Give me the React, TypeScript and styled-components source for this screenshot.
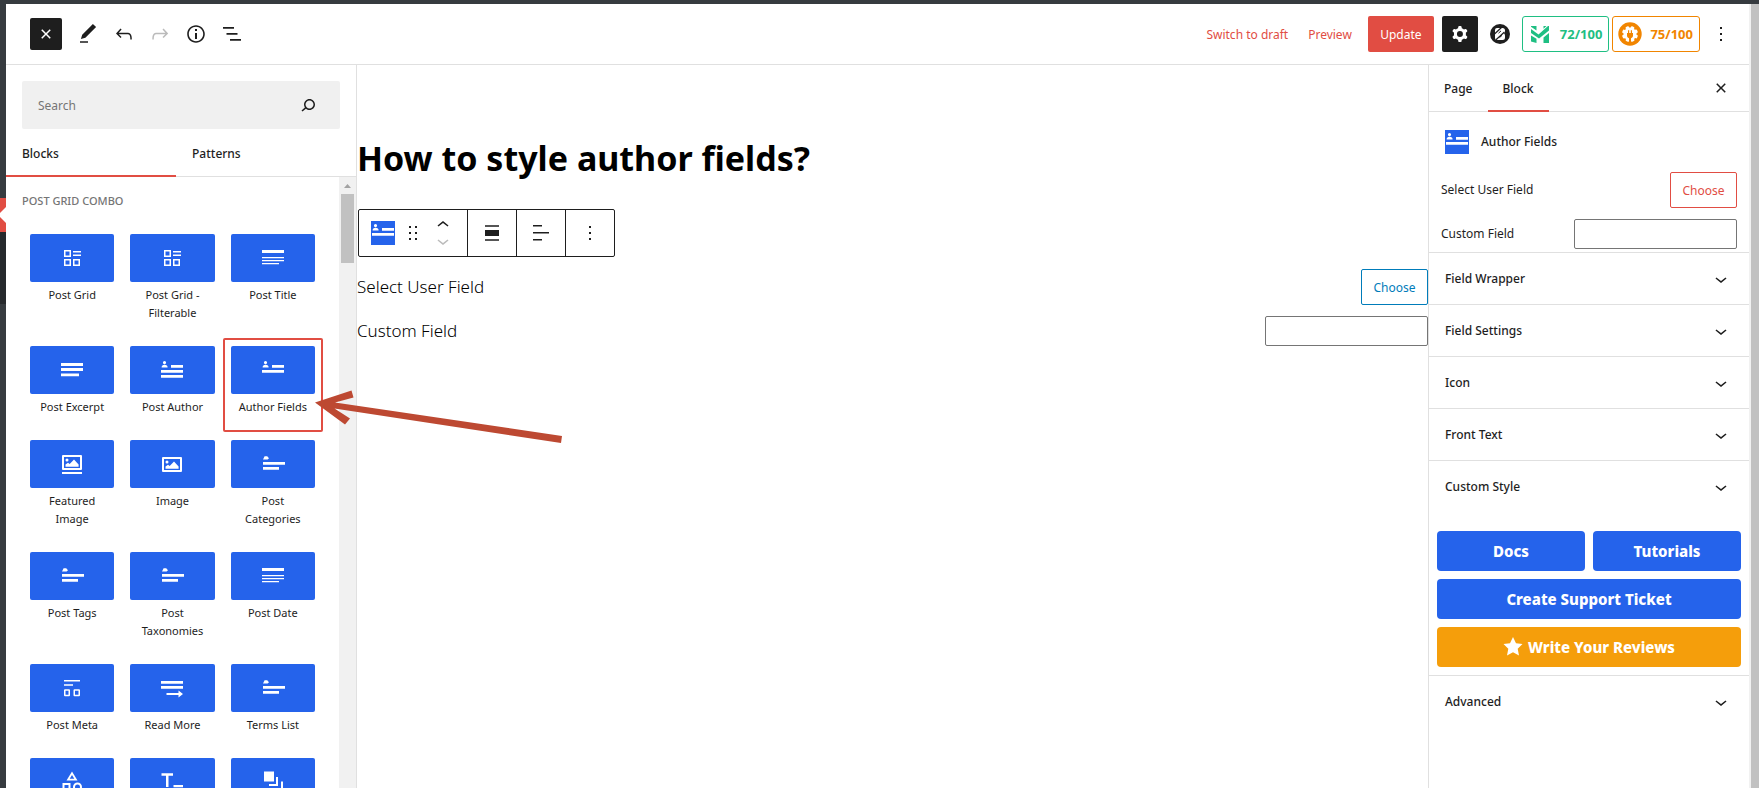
import React from 'react';
import styled, { createGlobalStyle, css } from 'styled-components';

const accent = '#e14d43';
const blue = '#2563eb';
const ink = '#1e1e1e';
const line = '#e0e0e0';

const GlobalStyle = createGlobalStyle`
  * { box-sizing: border-box; }
  body {
    margin: 0;
    background: #fff;
    color: ${ink};
    font: 400 12px/18px "Noto Sans", "Open Sans", sans-serif;
  }
  button, input { font: inherit; color: inherit; margin: 0; }
  button { padding: 0; border: 0; background: none; cursor: pointer; }
  h1, h2, p { margin: 0; }
  a { text-decoration: none; }
`;

/* ---------- icons ---------- */

const Svg = styled.svg<{ $size?: number }>`
  display: block;
  flex: none;
  width: ${({ $size = 24 }) => $size}px;
  height: ${({ $size = 24 }) => $size}px;
  fill: currentColor;
`;

const Icon = ({ d }: { d: string }) => (
  <Svg viewBox="0 0 24 24" aria-hidden="true">
    <path fillRule="evenodd" d={d} />
  </Svg>
);

const paths = {
  close:
    'M12 13.06l3.712 3.713 1.061-1.06L13.061 12l3.712-3.712-1.06-1.06L12 10.938 8.288 7.227l-1.061 1.06L10.939 12l-3.712 3.712 1.06 1.061L12 13.061z',
  pencil: 'M20.1 5.1L16.9 2 6.2 12.7l-1.3 4.4 4.5-1.3L20.1 5.1zM4 20.8h8v-1.5H4v1.5z',
  undo: 'M18.3 11.7c-.6-.6-1.4-.9-2.3-.9H6.7l2.9-3.3-1.1-1-4.5 5L8.5 16l1-1-2.7-2.7H16c.5 0 .9.2 1.3.5 1 1 1 3.4 1 4.5v.3h1.5v-.2c0-1.5 0-4.3-1.5-5.7z',
  redo: 'M15.6 6.5l-1.1 1 2.9 3.3H8c-.9 0-1.7.3-2.3.9-1.4 1.5-1.4 4.2-1.4 5.6v.2h1.5v-.3c0-1.1 0-3.5 1-4.5.3-.3.7-.5 1.3-.5h9.2L14.5 15l1.1 1.1 4.6-4.6-4.6-5z',
  info: 'M12 3.2c-4.8 0-8.8 3.9-8.8 8.8 0 4.8 3.9 8.8 8.8 8.8 4.8 0 8.8-3.9 8.8-8.8 0-4.8-4-8.8-8.8-8.8zm0 16c-4 0-7.2-3.3-7.2-7.2C4.8 8 8 4.8 12 4.8s7.2 3.3 7.2 7.2c0 4-3.2 7.2-7.2 7.2zM11 17h2v-6h-2v6zm0-8h2V7h-2v2z',
  list: 'M3 5h11v1.7H3V5zm3.5 6h11v1.7h-11V11zM21 17H10v1.7h11V17z',
  search:
    'M13.5 6C10.5 6 8 8.5 8 11.5c0 1.1.3 2.1.9 3l-3.4 3 1 1.1 3.4-2.9c1 .9 2.2 1.4 3.6 1.4 3 0 5.5-2.5 5.5-5.5C19 8.5 16.5 6 13.5 6zm0 9.5c-2.2 0-4-1.8-4-4s1.8-4 4-4 4 1.8 4 4-1.8 4-4 4z',
  down: 'M17.5 11.6L12 16l-5.5-4.4.9-1.2L12 14l4.500-3.600 1 1.200z',
  up: 'M6.500 12.400L12 8l5.500 4.400-.9 1.200L12 10l-4.500 3.600-1-1.200z',
  drag: 'M8 7h2V5H8v2zm0 6h2v-2H8v2zm0 6h2v-2H8v2zm6-14v2h2V5h-2zm0 8h2v-2h-2v2zm0 6h2v-2h-2v2z',
  alignNone: 'M5 15h14V9H5v6zm0 4.8h14v-1.5H5v1.5zM5 4.2v1.5h14V4.2H5z',
  alignLeft: 'M13 5.5H4V4h9v1.5zm7 7H4V11h16v1.5zm-7 7H4V18h9v1.5z',
  more: 'M13 19h-2v-2h2v2zm0-6h-2v-2h2v2zm0-6h-2V5h2v2z',
  cog: 'M10.289 4.836A1 1 0 0111.275 4h1.306a1 1 0 01.987.836l.244 1.466c.787.26 1.503.679 2.108 1.218l1.393-.522a1 1 0 011.216.437l.653 1.13a1 1 0 01-.23 1.273l-1.148.944a6.025 6.025 0 010 2.435l1.149.946a1 1 0 01.23 1.272l-.653 1.13a1 1 0 01-1.216.437l-1.394-.522c-.605.54-1.32.958-2.108 1.218l-.244 1.466a1 1 0 01-.987.836h-1.306a1 1 0 01-.986-.836l-.244-1.466a5.995 5.995 0 01-2.108-1.218l-1.394.522a1 1 0 01-1.217-.436l-.653-1.131a1 1 0 01.23-1.272l1.149-.946a6.026 6.026 0 010-2.435l-1.148-.944a1 1 0 01-.23-1.272l.653-1.131a1 1 0 011.217-.437l1.393.522a5.994 5.994 0 012.108-1.218l.244-1.466zM14.929 12a3 3 0 11-6 0 3 3 0 016 0z',
  // block glyphs
  grid: 'M4 4h7v7H4zM5.5 5.5v4h4v-4zM4 13h7v7H4zM5.5 14.5v4h4v-4zM13 13h7v7h-7zM14.5 14.5v4h4v-4zM13 5h8v1.5h-8zM13 8.5h8V10h-8z',
  title: 'M1 4h22v3H1zM1 11h22v1.3H1zM1 14h22v1.3H1zM1 17h17v1.3H1z',
  excerpt: 'M1 5h22v3H1zM1 10h22v3H1zM1 15.5h18v2.8H1z',
  author:
    'M4.5 3a1.6 1.6 0 110 3.2 1.6 1.6 0 010-3.2zM1.6 9.6c0-2 1-2.9 3-2.9s3 .9 3 2.9zM11 7h12v2.8H11zM1 12h22v2.8H1zM1 17h22v2.8H1z',
  authorFields:
    'M4.5 3a1.6 1.6 0 110 3.2 1.6 1.6 0 010-3.2zM1.6 9.6c0-2 1-2.9 3-2.9s3 .9 3 2.9zM11 7h12v2.8H11zM1 12h22v2.8H1z',
  featured:
    'M3 3h18a1 1 0 011 1v13a1 1 0 01-1 1H3a1 1 0 01-1-1V4a1 1 0 011-1zM4 5v11h16V5zM7 6.5a1.5 1.5 0 110 3 1.5 1.5 0 010-3zM5.5 14.7v-2.2l2.5-1.7 1.7 1.2L14 7.4l4.6 5v2.3zM2 20h20v2H2z',
  image:
    'M3 5h18a1 1 0 011 1v13a1 1 0 01-1 1H3a1 1 0 01-1-1V6a1 1 0 011-1zM4 7v11h16V7zM7 8.5a1.5 1.5 0 110 3 1.5 1.5 0 010-3zM5.5 16.7v-2.2l2.5-1.7 1.7 1.2L14 9.4l4.6 5v2.3z',
  terms: 'M2 7.5L3.6 4.3h2.6L8 6.3 6.6 7.5zM2 10h22v2.8H2zM2 15h16v2.8H2z',
  meta: 'M4 4h16v1.5H4zM4 8.3h9v1.5H4zM5 13.3h4a1 1 0 011 1v5a1 1 0 01-1 1H5a1 1 0 01-1-1v-5a1 1 0 011-1zM5.5 14.8v4h3v-4zM14.5 13.3H19a1 1 0 011 1v5a1 1 0 01-1 1h-4.5a1 1 0 01-1-1v-5a1 1 0 011-1zM15 14.8v4h3.5v-4z',
  readMore: 'M1 5h22v2.8H1zM1 10h22v2.8H1zM6.5 17h12v-2.500L23 18l-4.500 3.500V19h-12z',
  shapes:
    'M12 1.5l5.500 9h-11zM12 5L9.700 8.800h4.600zM2.500 13h8v8h-8zM4.500 15v4h4v-4zM17.500 12.500a4.500 4.500 0 110 9 4.500 4.500 0 010-9zM17.500 14.500a2.500 2.500 0 100 5 2.500 2.500 0 000-5z',
  text: 'M1.500 3.300H13v2.400H8.500V17H6V5.700H1.500zM13.500 15H23v2.300h-9.500z',
  layers: 'M3 1.500h10v10H3zM15 7h2v9H8v-2h7zM20 11.500h2v10h-9v-2h7z',
};

type Glyph = keyof typeof paths;

/* ---------- page shell ---------- */

const Page = styled.div`
  position: relative;
  display: flex;
  height: 100vh;
  border-top: 4px solid #363b3f;
  overflow: hidden;
`;

const AdminEdge = styled.div`
  display: flex;
  flex-direction: column;
  flex: none;
  width: 6px;
  padding-top: 194px;
  background: #363b3f;
`;

const CurrentMenu = styled.div`
  height: 34px;
  background: ${accent};
`;

const SubMenu = styled.div`
  height: 72px;
  background: #26292c;
`;

const Editor = styled.div`
  display: flex;
  flex-direction: column;
  flex: 1;
  min-width: 0;
`;

const Workspace = styled.div`
  display: flex;
  flex: 1;
  min-height: 0;
`;

const PageScrollbar = styled.div`
  flex: none;
  width: 10px;
  border-left: 2px solid #f1f1f1;
  background: #c1c1c1;
`;

/* ---------- header ---------- */

const Header = styled.header`
  display: flex;
  align-items: center;
  justify-content: space-between;
  flex: none;
  height: 61px;
  padding: 0 10px 0 24px;
  border-bottom: 1px solid ${line};
`;

const HeaderGroup = styled.div`
  display: flex;
  align-items: center;
`;

const IconButton = styled.button<{ $dark?: boolean; $size?: number; $muted?: boolean }>`
  display: flex;
  align-items: center;
  justify-content: center;
  flex: none;
  width: ${({ $size = 36 }) => $size}px;
  height: ${({ $size = 36 }) => $size}px;
  border-radius: 2px;
  color: ${({ $muted }) => ($muted ? '#bbb' : ink)};
  ${({ $dark }) =>
    $dark &&
    css`
      background: ${ink};
      color: #fff;
    `}
`;

const InserterButton = styled(IconButton)`
  margin-right: 8px;
`;

const HeaderLinks = styled.nav`
  display: flex;
  gap: 20px;
  padding: 2px 16px 0 0;
`;

const TextLink = styled.a`
  color: ${accent};
`;

const UpdateButton = styled.button`
  min-width: 66px;
  height: 36px;
  padding: 1px 12px 0;
  margin-right: 8px;
  border-radius: 2px;
  background: ${accent};
  color: #fff;
`;

const Score = styled.button<{ $tone: string }>`
  display: flex;
  align-items: center;
  gap: 8px;
  height: 36px;
  margin-right: 3px;
  padding: 0 6px 0 5px;
  border: 1px solid ${({ $tone }) => $tone};
  border-radius: 3px;
  color: ${({ $tone }) => $tone};
  font-size: 13px;
  font-weight: 700;
`;

/* ---------- block library ---------- */

const Library = styled.aside`
  display: flex;
  flex-direction: column;
  flex: none;
  width: 351px;
  border-right: 1px solid ${line};
`;

const SearchBox = styled.label`
  display: flex;
  align-items: center;
  flex: none;
  height: 48px;
  margin: 16px 16px 0;
  padding: 0 20px 0 16px;
  border-radius: 2px;
  background: #f0f0f0;
`;

const SearchInput = styled.input`
  flex: 1;
  min-width: 0;
  border: 0;
  outline: 0;
  padding: 2px 0 0;
  background: none;
  &::placeholder { color: #757575; opacity: 1; }
`;

const LibraryTabs = styled.div`
  display: flex;
  flex: none;
  height: 48px;
  padding-right: 10px;
  border-bottom: 1px solid ${line};
`;

const LibraryTab = styled.button<{ $active?: boolean }>`
  flex: 1;
  height: 48px;
  padding: 3px 16px 0;
  text-align: left;
  font-weight: 500;
  border-bottom: 2px solid ${({ $active }) => ($active ? accent : 'transparent')};
`;

const LibraryBody = styled.div`
  display: flex;
  flex: 1;
  min-height: 0;
`;

const LibraryContent = styled.div`
  flex: 1;
  min-width: 0;
  padding: 15px 16px 0;
  overflow: hidden;
`;

const GroupTitle = styled.h2`
  margin-bottom: 16px;
  color: #757575;
  font-size: 11px;
  font-weight: 500;
  line-height: 18px;
  text-transform: uppercase;
`;

const BlockGrid = styled.div`
  display: grid;
  grid-template-columns: repeat(3, 1fr);
`;

const BlockItem = styled.button<{ $selected?: boolean }>`
  display: flex;
  flex-direction: column;
  padding: 8px;
  border-radius: 2px;
  font-size: 11px;
  ${({ $selected }) =>
    $selected &&
    css`
      box-shadow: inset 0 0 0 2px ${accent};
    `}
`;

const BlockTile = styled.span`
  display: flex;
  align-items: center;
  justify-content: center;
  width: 100%;
  height: 48px;
  border-radius: 2px;
  background: ${blue};
  color: #fff;
`;

const BlockName = styled.span`
  width: 100%;
  padding: 4px 2px 8px;
  text-align: center;
`;

const Scrollbar = styled.div`
  display: flex;
  flex-direction: column;
  align-items: center;
  flex: none;
  width: 17px;
  background: #f1f1f1;
`;

const ScrollThumb = styled.div`
  width: 13px;
  height: 69px;
  background: #c1c1c1;
`;

/* ---------- canvas ---------- */

const Canvas = styled.main`
  flex: 1;
  min-width: 0;
  padding-top: 67px;
  color: #000;
`;

const PostTitle = styled.h1`
  font-size: 34px;
  line-height: 52px;
  font-weight: 700;
`;

const BlockToolbar = styled.div`
  display: flex;
  width: max-content;
  height: 48px;
  margin: 25px 0 12px 1px;
  border: 1px solid ${ink};
  border-radius: 2px;
`;

const ToolbarGroup = styled.div`
  display: flex;
  align-items: center;
  justify-content: center;
  min-width: 49px;
  &:first-child { padding: 0 12px; }
  & + & { border-left: 1px solid ${ink}; }
`;

const Movers = styled.div`
  display: flex;
  flex-direction: column;
`;

const Mover = styled.button<{ $muted?: boolean }>`
  display: flex;
  align-items: center;
  height: 16px;
  overflow: hidden;
  color: ${({ $muted }) => ($muted ? '#bbb' : ink)};
`;

const BlockBadge = styled.span`
  display: flex;
  width: 24px;
  height: 24px;
  background: ${blue};
  color: #fff;
`;

const FieldRow = styled.div<{ $large?: boolean }>`
  display: flex;
  align-items: center;
  justify-content: space-between;
  margin-bottom: 11px;
  ${({ $large }) =>
    $large &&
    css`
      font-size: 17px;
      font-weight: 300;
      line-height: 30px;
    `}
`;

const ChooseButton = styled.button<{ $color: string }>`
  height: 36px;
  width: 67px;
  padding-top: 1px;
  border: 1px solid ${({ $color }) => $color};
  border-radius: 2px;
  color: ${({ $color }) => $color};
  font-size: 12px;
  font-weight: 400;
`;

const FieldInput = styled.input`
  width: 163px;
  height: 30px;
  padding: 0 8px;
  border: 1px solid #757575;
  border-radius: 2px;
  background: #fff;
`;

/* ---------- settings sidebar ---------- */

const Settings = styled.aside`
  display: flex;
  flex-direction: column;
  flex: none;
  width: 321px;
  border-left: 1px solid ${line};
`;

const SettingsTabs = styled.div`
  display: flex;
  align-items: center;
  height: 47px;
  padding-right: 16px;
  border-bottom: 1px solid ${line};
`;

const SettingsTab = styled.button<{ $active?: boolean }>`
  height: 47px;
  padding: 3px 15px 0;
  font-weight: 500;
  border-bottom: 2px solid ${({ $active }) => ($active ? accent : 'transparent')};
`;

const Spacer = styled.div`
  flex: 1;
`;

const BlockCard = styled.div`
  display: flex;
  align-items: center;
  gap: 12px;
  height: 60px;
  padding: 0 16px;
`;

const CardTitle = styled.h2`
  font-size: 12px;
  line-height: 18px;
  font-weight: 500;
`;

const FieldGroup = styled.div`
  padding: 0 12px 3px;
  & > :last-child { margin-bottom: 0; }
`;

const Panel = styled.button`
  display: flex;
  align-items: center;
  justify-content: space-between;
  width: 100%;
  height: 52px;
  padding: 0 16px;
  border-top: 1px solid ${line};
  font-weight: 500;
`;

const Actions = styled.div`
  display: grid;
  grid-template-columns: 1fr 1fr;
  gap: 8px;
  padding: 19px 8px 8px;
`;

const ActionLink = styled.a<{ $wide?: boolean; $warm?: boolean }>`
  display: flex;
  align-items: center;
  justify-content: center;
  gap: 5px;
  grid-column: ${({ $wide }) => ($wide ? '1 / -1' : 'auto')};
  height: 40px;
  border-radius: 4px;
  background: ${({ $warm }) => ($warm ? '#f59e0b' : blue)};
  color: #fff;
  font-size: 15px;
  font-weight: 800;
`;

const Pointer = styled.svg`
  position: absolute;
  left: 312px;
  top: 380px;
  width: 260px;
  height: 66px;
  pointer-events: none;
`;

/* ---------- data ---------- */

const blocks: { name: string; glyph: Glyph; selected?: boolean }[] = [
  { name: 'Post Grid', glyph: 'grid' },
  { name: 'Post Grid - Filterable', glyph: 'grid' },
  { name: 'Post Title', glyph: 'title' },
  { name: 'Post Excerpt', glyph: 'excerpt' },
  { name: 'Post Author', glyph: 'author' },
  { name: 'Author Fields', glyph: 'authorFields', selected: true },
  { name: 'Featured Image', glyph: 'featured' },
  { name: 'Image', glyph: 'image' },
  { name: 'Post Categories', glyph: 'terms' },
  { name: 'Post Tags', glyph: 'terms' },
  { name: 'Post Taxonomies', glyph: 'terms' },
  { name: 'Post Date', glyph: 'title' },
  { name: 'Post Meta', glyph: 'meta' },
  { name: 'Read More', glyph: 'readMore' },
  { name: 'Terms List', glyph: 'terms' },
  { name: '', glyph: 'shapes' },
  { name: '', glyph: 'text' },
  { name: '', glyph: 'layers' },
];

const panels = ['Field Wrapper', 'Field Settings', 'Icon', 'Front Text', 'Custom Style'];

const gearTeeth = [22, 67, 112, 157];

const PanelToggle = ({ label }: { label: string }) => (
  <Panel aria-expanded="false">
    {label}
    <Icon d={paths.down} />
  </Panel>
);

export default function App() {
  return (
    <>
      <GlobalStyle />
      <Page>
        <AdminEdge>
          <CurrentMenu>
            <svg width="6" height="34" viewBox="0 0 6 34" display="block" aria-hidden="true">
              <path d="M6 9L-2 17l8 8z" fill="#fff" />
            </svg>
          </CurrentMenu>
          <SubMenu />
        </AdminEdge>

        <Editor>
          <Header>
            <HeaderGroup>
              <InserterButton $dark $size={32} aria-label="Close block inserter">
                <Icon d={paths.close} />
              </InserterButton>
              <IconButton aria-label="Tools"><Icon d={paths.pencil} /></IconButton>
              <IconButton aria-label="Undo"><Icon d={paths.undo} /></IconButton>
              <IconButton $muted aria-label="Redo"><Icon d={paths.redo} /></IconButton>
              <IconButton aria-label="Details"><Icon d={paths.info} /></IconButton>
              <IconButton aria-label="List view"><Icon d={paths.list} /></IconButton>
            </HeaderGroup>

            <HeaderGroup>
              <HeaderLinks>
                <TextLink href="#draft">Switch to draft</TextLink>
                <TextLink href="#preview">Preview</TextLink>
              </HeaderLinks>
              <UpdateButton>Update</UpdateButton>
              <IconButton $dark aria-label="Settings"><Icon d={paths.cog} /></IconButton>
              <IconButton $size={44} aria-label="Builder">
                <Svg $size={20} viewBox="0 0 20 20" aria-hidden="true">
                  <circle cx="10" cy="10" r="10" />
                  <path
                    fill="#fff"
                    d="M7 4h5.500A2.500 2.500 0 0115 6.500v1a2.500 2.500 0 01-1 2 2.500 2.500 0 011 2.200v1.800a2.500 2.500 0 01-2.500 2.500H7a2 2 0 01-2-2V6a2 2 0 012-2z"
                  />
                  <path d="M4.500 10L11.500 3.500M6 15.800L14.500 8" stroke={ink} strokeWidth="1.200" fill="none" />
                  <path d="M8.500 9.200l2.500-2.300M9.500 13.600l2.500-2.200" stroke={ink} strokeWidth="1" fill="none" />
                </Svg>
              </IconButton>
              <Score $tone="#1fbf83">
                <Svg viewBox="0 0 24 24" aria-hidden="true">
                  <path d="M3 4h5.500v4.500L3 4.800zM3 7l7.500 5.500L20 4h1v4.500L11 16.500 3 11zM3 13.500l5.500 3.300V21L3 19.500zM21 11v10h-5.500v-5.500zM15.500 4h3l-3 2.700z" />
                </Svg>
                72/100
              </Score>
              <Score $tone="#f18500">
                <Svg viewBox="0 0 24 24" aria-hidden="true">
                  <circle cx="12" cy="12" r="11.700" />
                  <g fill="#fff">
                    <circle cx="12" cy="12" r="6.500" />
                    {gearTeeth.map((a) => (
                      <rect key={a} x="10.200" y="4" width="3.600" height="16" rx="1" transform={`rotate(${a} 12 12)`} />
                    ))}
                  </g>
                  <path d="M9 11h6v2.500c0 1.500-.8 2.400-2 2.700V22h-2v-5.800c-1.200-.3-2-1.200-2-2.700zM10 8.300h1.200V11H10zM12.800 8.300H14V11h-1.200z" />
                </Svg>
                75/100
              </Score>
              <IconButton aria-label="Options"><Icon d={paths.more} /></IconButton>
            </HeaderGroup>
          </Header>

          <Workspace>
            <Library>
              <SearchBox>
                <SearchInput type="text" placeholder="Search" aria-label="Search blocks" />
                <Icon d={paths.search} />
              </SearchBox>
              <LibraryTabs role="tablist">
                <LibraryTab $active role="tab" aria-selected="true">Blocks</LibraryTab>
                <LibraryTab role="tab" aria-selected="false">Patterns</LibraryTab>
              </LibraryTabs>
              <LibraryBody>
                <LibraryContent>
                  <GroupTitle>Post Grid Combo</GroupTitle>
                  <BlockGrid>
                    {blocks.map((b) => (
                      <BlockItem key={b.name + b.glyph} $selected={b.selected}>
                        <BlockTile><Icon d={paths[b.glyph]} /></BlockTile>
                        <BlockName>{b.name}</BlockName>
                      </BlockItem>
                    ))}
                  </BlockGrid>
                </LibraryContent>
                <Scrollbar>
                  <svg width="17" height="17" viewBox="0 0 17 17" display="block" aria-hidden="true">
                    <path d="M5 11l3.500-4 3.500 4z" fill="#a3a3a3" />
                  </svg>
                  <ScrollThumb />
                </Scrollbar>
              </LibraryBody>
            </Library>

            <Canvas>
              <PostTitle>How to style author fields?</PostTitle>
              <BlockToolbar role="toolbar" aria-label="Block tools">
                <ToolbarGroup>
                  <BlockBadge><Icon d={paths.authorFields} /></BlockBadge>
                  <IconButton aria-label="Drag"><Icon d={paths.drag} /></IconButton>
                  <Movers>
                    <Mover aria-label="Move up"><Icon d={paths.up} /></Mover>
                    <Mover $muted aria-label="Move down"><Icon d={paths.down} /></Mover>
                  </Movers>
                </ToolbarGroup>
                <ToolbarGroup>
                  <IconButton aria-label="Align"><Icon d={paths.alignNone} /></IconButton>
                </ToolbarGroup>
                <ToolbarGroup>
                  <IconButton aria-label="Align text"><Icon d={paths.alignLeft} /></IconButton>
                </ToolbarGroup>
                <ToolbarGroup>
                  <IconButton aria-label="Options"><Icon d={paths.more} /></IconButton>
                </ToolbarGroup>
              </BlockToolbar>
              <FieldRow $large>
                <span>Select User Field</span>
                <ChooseButton $color="#007cba">Choose</ChooseButton>
              </FieldRow>
              <FieldRow $large>
                <label htmlFor="canvas-field">Custom Field</label>
                <FieldInput id="canvas-field" type="text" />
              </FieldRow>
            </Canvas>

            <Settings>
              <SettingsTabs role="tablist">
                <SettingsTab role="tab" aria-selected="false">Page</SettingsTab>
                <SettingsTab $active role="tab" aria-selected="true">Block</SettingsTab>
                <Spacer />
                <IconButton $size={24} aria-label="Close settings"><Icon d={paths.close} /></IconButton>
              </SettingsTabs>
              <BlockCard>
                <BlockBadge><Icon d={paths.authorFields} /></BlockBadge>
                <CardTitle>Author Fields</CardTitle>
              </BlockCard>
              <FieldGroup>
                <FieldRow>
                  <span>Select User Field</span>
                  <ChooseButton $color={accent}>Choose</ChooseButton>
                </FieldRow>
                <FieldRow>
                  <label htmlFor="settings-field">Custom Field</label>
                  <FieldInput id="settings-field" type="text" />
                </FieldRow>
              </FieldGroup>
              {panels.map((p) => <PanelToggle key={p} label={p} />)}
              <Actions>
                <ActionLink href="#docs">Docs</ActionLink>
                <ActionLink href="#tutorials">Tutorials</ActionLink>
                <ActionLink $wide href="#ticket">Create Support Ticket</ActionLink>
                <ActionLink $wide $warm href="#reviews">
                  <Svg $size={20} viewBox="0 0 20 20" aria-hidden="true">
                    <path d="M10 0l3 6.300 6.500.8-4.800 4.700 1.300 6.700L10 15.300 4 18.500l1.300-6.700L.5 7.100 7 6.300z" />
                  </Svg>
                  Write Your Reviews
                </ActionLink>
              </Actions>
              <PanelToggle label="Advanced" />
            </Settings>
          </Workspace>
        </Editor>

        <PageScrollbar />

        <Pointer viewBox="0 0 260 66" aria-hidden="true">
          <path
            fill="#bd4932"
            d="M3 18.500L39.500 6.500l2 7-18.500 5L250 52l-1 7L22.500 24.500 38 34.500l-5 6z"
          />
        </Pointer>
      </Page>
    </>
  );
}
